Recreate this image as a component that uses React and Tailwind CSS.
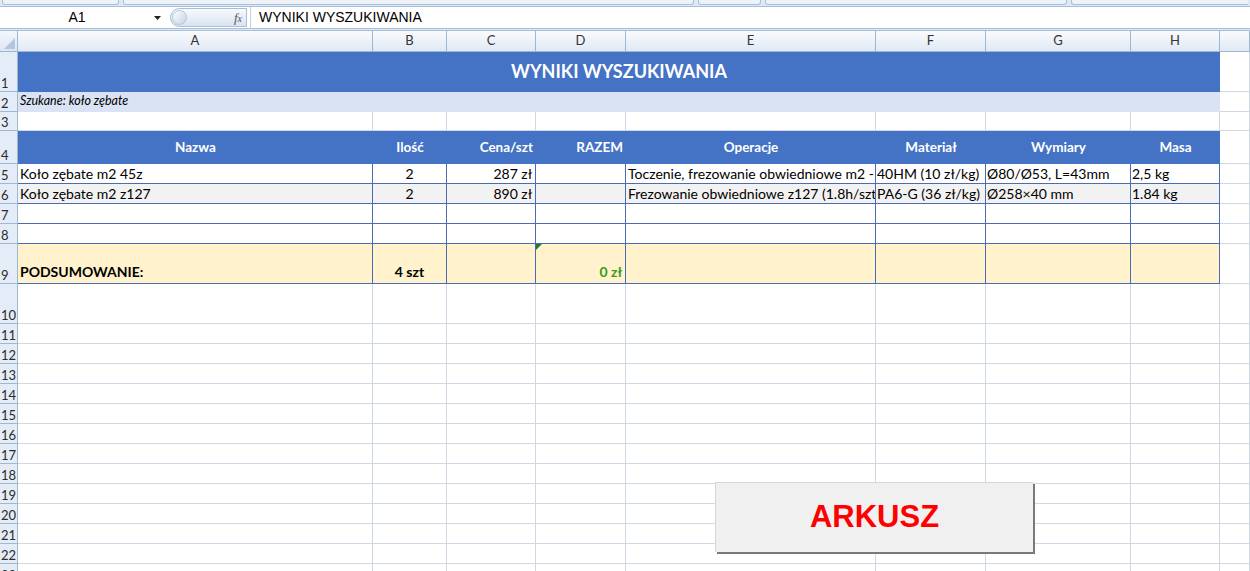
import React from "react";
import clsx from "clsx";

const GRID = "grid grid-cols-[18px_355px_74px_89px_90px_250px_110px_145px_89px_1fr]";
const LETTERS = ["A", "B", "C", "D", "E", "F", "G", "H", ""];

// plain grid cell, light gridlines or blue table borders
const Cell = ({ blue, className, children }) => (
  <div
    className={clsx(
      "border-r border-b overflow-hidden whitespace-nowrap flex items-center",
      blue ? "border-[#4a6cb3] px-[3px]" : "border-[#d0d7e5]",
      className
    )}
  >
    {children}
  </div>
);

const RowHead = ({ n }) => (
  <div className="border-r border-b border-[#9eb6ce] bg-[#e4ecf7] text-[13px] leading-none text-[#2b2b2b] flex items-end pb-[1px] pl-[1px] overflow-hidden">
    {n}
  </div>
);

const Row = ({ n, h, children }) => (
  <div className={clsx(GRID, h)}>
    <RowHead n={n} />
    {children}
  </div>
);

const EmptyRow = ({ n, h = "h-[20px]" }) => (
  <Row n={n} h={h}>
    {LETTERS.map((l, i) => (
      <Cell key={i} />
    ))}
  </Row>
);

const items = [
  {
    name: "Koło zębate m2 45z",
    qty: "2",
    price: "287 zł",
    ops: "Toczenie, frezowanie obwiedniowe m2 - z45",
    mat: "40HM (10 zł/kg)",
    dim: "Ø80/Ø53, L=43mm",
    mass: "2,5 kg",
    bg: "bg-white",
  },
  {
    name: "Koło zębate m2 z127",
    qty: "2",
    price: "890 zł",
    ops: "Frezowanie obwiedniowe z127 (1.8h/szt)",
    mat: "PA6-G (36 zł/kg)",
    dim: "Ø258×40 mm",
    mass: "1.84 kg",
    bg: "bg-[#f2f2f2]",
  },
];

const App = () => {
  return (
    <div className="relative w-[1250px] h-[571px] overflow-hidden bg-white font-['Lato','Liberation_Sans',sans-serif] text-black">
      {/* ribbon bottom edge */}
      <div className="h-[7px] bg-[#dfe9f5] flex items-start gap-[4px] px-[2px] border-b border-[#a7bdd8]">
        <div className="w-[117px] h-[5px] bg-[#eef3fa] border-x border-b border-[#a9c0dc] rounded-b-[3px]" />
        <div className="w-[571px] h-[5px] bg-[#eef3fa] border-x border-b border-[#a9c0dc] rounded-b-[3px]" />
        <div className="w-[63px] h-[5px] bg-[#eef3fa] border-x border-b border-[#a9c0dc] rounded-b-[3px]" />
        <div className="w-[302px] h-[5px] bg-[#eef3fa] border-x border-b border-[#a9c0dc] rounded-b-[3px]" />
        <div className="flex-1 h-[5px] bg-[#eef3fa] border-l border-b border-[#a9c0dc] rounded-bl-[3px]" />
      </div>

      {/* formula bar */}
      <div className="h-[22px] flex items-center bg-white border-b border-[#a7bdd8] font-['Liberation_Sans',sans-serif]">
        <div className="w-[150px] text-center text-[14px] pl-[4px]">A1</div>
        <div className="w-[15px] flex justify-center">
          <svg width="7" height="4" viewBox="0 0 7 4">
            <path d="M0 0h7L3.5 4z" fill="#222" />
          </svg>
        </div>
        <div className="ml-[5px] w-[77px] h-[19px] rounded-l-full bg-gradient-to-b from-[#f7fafd] to-[#d9e4f2] border border-[#a9bdd6] flex items-center justify-between pr-[4px]">
          <div className="w-[15px] h-[15px] rounded-full bg-gradient-to-br from-white to-[#c5d3e4] border border-[#b5c5d8] ml-[1px]" />
          <span className="font-['Liberation_Serif',serif] italic text-[13px] text-[#555]">
            f<span className="text-[10px]">x</span>
          </span>
        </div>
        <div className="ml-[3px] h-[22px] border-l border-[#c5d2e2] pl-[8px] flex items-center text-[14px]">
          WYNIKI WYSZUKIWANIA
        </div>
      </div>

      <div className="h-[2px] bg-[#dfe9f5] border-b border-[#a7bdd8]" />

      {/* column headers */}
      <div className={clsx(GRID, "h-[21px]")}>
        <div className="border-r border-b border-[#9eb6ce] bg-gradient-to-b from-[#f4f7fc] to-[#dde6f3] flex items-end justify-end p-[2px]">
          <svg width="11" height="11" viewBox="0 0 11 11">
            <path d="M11 0v11H0z" fill="#b4c6dd" />
          </svg>
        </div>
        {LETTERS.map((l, i) => (
          <div
            key={i}
            className="border-r border-b border-[#9eb6ce] bg-gradient-to-b from-[#f9fbfd] to-[#e1e9f5] flex items-center justify-center text-[13px] text-[#333]"
          >
            {l}
          </div>
        ))}
      </div>

      {/* row 1 - title */}
      <Row n="1" h="h-[40px]">
        <div className="col-span-8 bg-[#4472c4] border-b border-[#4472c4] flex items-center justify-center text-white font-bold text-[18px]">
          WYNIKI WYSZUKIWANIA
        </div>
        <Cell />
      </Row>

      {/* row 2 - search phrase */}
      <Row n="2" h="h-[20px]">
        <div className="col-span-8 bg-[#dae3f3] border-b border-[#dae3f3] flex items-center pl-[2px] italic text-[12.5px]">
          Szukane: koło zębate
        </div>
        <Cell />
      </Row>

      <EmptyRow n="3" h="h-[19px]" />

      {/* row 4 - table header */}
      <Row n="4" h="h-[33px]">
        <div className="col-span-8 grid grid-cols-[355px_74px_89px_90px_250px_110px_145px_89px] bg-[#4472c4] text-white font-bold text-[13.5px]">
          <div className="flex items-center justify-center">Nazwa</div>
          <div className="flex items-center justify-center">Ilość</div>
          <div className="flex items-center justify-end pr-[3px]">Cena/szt</div>
          <div className="flex items-center justify-end pr-[3px]">RAZEM</div>
          <div className="flex items-center justify-center">Operacje</div>
          <div className="flex items-center justify-center">Materiał</div>
          <div className="flex items-center justify-center">Wymiary</div>
          <div className="flex items-center justify-center">Masa</div>
        </div>
        <Cell />
      </Row>

      {items.map((it, i) => (
        <Row key={i} n={String(5 + i)} h="h-[20px]">
          <Cell blue className={clsx(it.bg, "text-[14px] pl-[2px]")}>{it.name}</Cell>
          <Cell blue className={clsx(it.bg, "text-[14px] justify-center")}>{it.qty}</Cell>
          <Cell blue className={clsx(it.bg, "text-[14px] justify-end")}>{it.price}</Cell>
          <Cell blue className={it.bg} />
          <Cell blue className={clsx(it.bg, "text-[14px] pl-[2px]")}>{it.ops}</Cell>
          <Cell blue className={clsx(it.bg, "text-[14px] pl-[1px]")}>{it.mat}</Cell>
          <Cell blue className={clsx(it.bg, "text-[14px] pl-[1px]")}>{it.dim}</Cell>
          <Cell blue className={clsx(it.bg, "text-[14px] pl-[1px]")}>{it.mass}</Cell>
          <Cell />
        </Row>
      ))}

      {["7", "8"].map((n) => (
        <Row key={n} n={n} h="h-[20px]">
          {LETTERS.slice(0, 8).map((l) => (
            <Cell blue key={l} />
          ))}
          <Cell />
        </Row>
      ))}

      {/* row 9 - summary */}
      <Row n="9" h="h-[40px]">
        <Cell blue className="bg-[#fff2cc] items-end pb-[1px] pl-[2px] font-bold text-[14px]">
          PODSUMOWANIE:
        </Cell>
        <Cell blue className="bg-[#fff2cc] items-end justify-center pb-[1px] font-bold text-[14px]">
          4 szt
        </Cell>
        <Cell blue className="bg-[#fff2cc]" />
        <Cell blue className="relative bg-[#fff2cc] items-end justify-end pb-[1px] font-bold text-[14px] text-[#3a9b1c]">
          <span className="absolute left-0 top-0 w-0 h-0 border-t-[6px] border-r-[6px] border-t-[#1e7a3c] border-r-transparent" />
          0 zł
        </Cell>
        {LETTERS.slice(4, 8).map((l) => (
          <Cell blue key={l} className="bg-[#fff2cc]" />
        ))}
        <Cell />
      </Row>

      <EmptyRow n="10" h="h-[40px]" />
      {Array.from({ length: 13 }, (_, i) => (
        <EmptyRow key={i} n={String(11 + i)} />
      ))}

      {/* form button over the sheet */}
      <button className="absolute left-[715px] top-[482px] w-[318px] h-[70px] bg-[#f0f0f0] border-t border-l border-[#d6d6d6] shadow-[2px_2px_0_#7a7a7a] flex items-center justify-center font-['Liberation_Sans',sans-serif] font-bold text-[31px] text-[#ff0000]">
        ARKUSZ
      </button>
    </div>
  );
};

export default App;
